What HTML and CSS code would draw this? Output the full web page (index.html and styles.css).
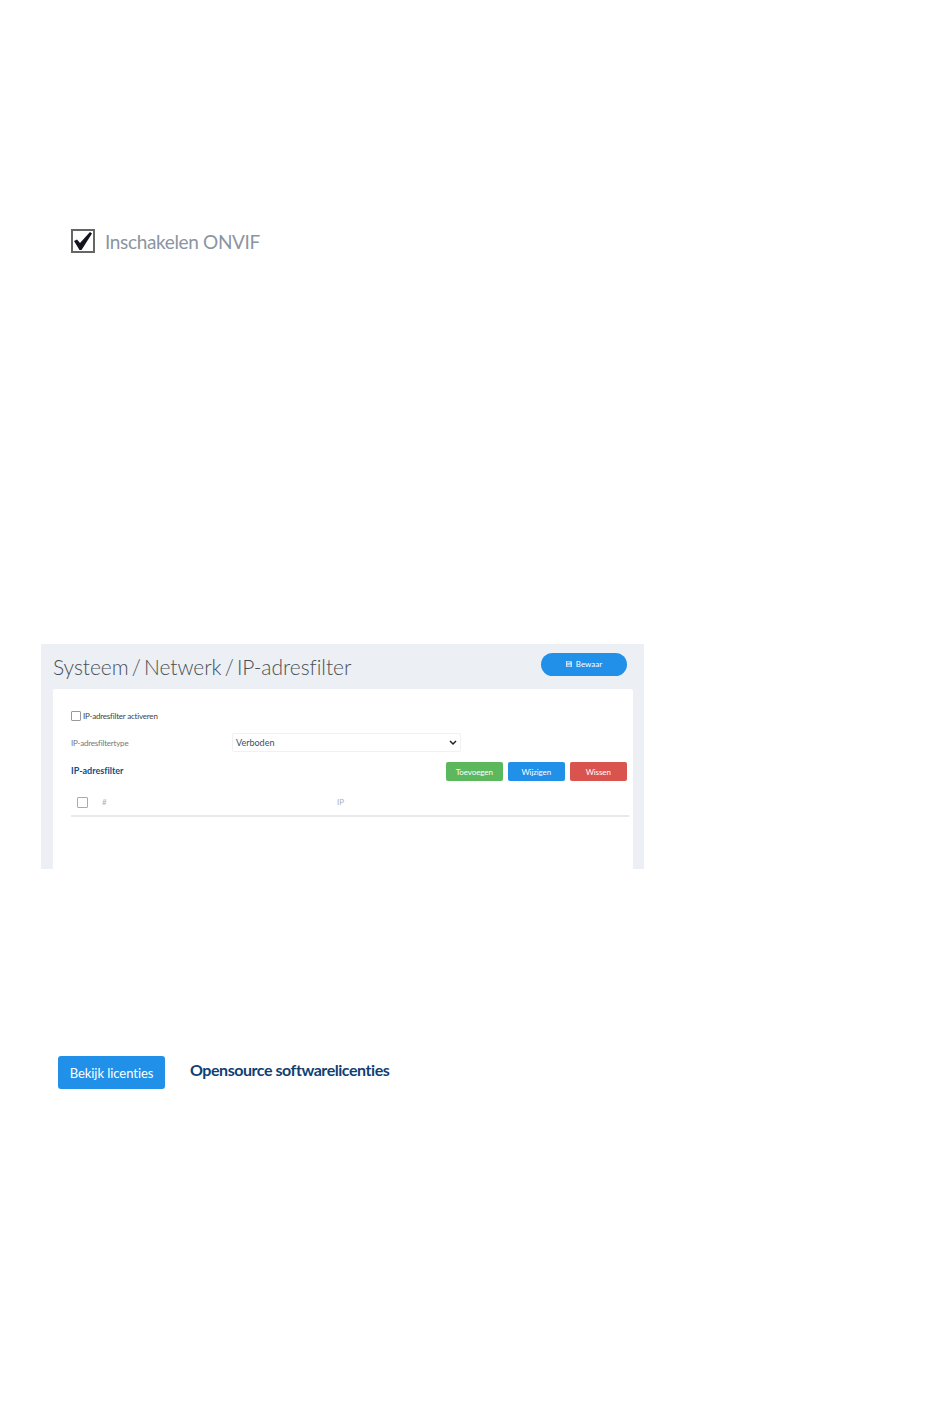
FILE: index.html
```html
<!DOCTYPE html>
<html lang="nl">
<head>
  <meta charset="UTF-8" />
  <title>ONVIF en IP-adresfilter</title>
  <link rel="stylesheet" href="styles.css">
</head>
<body>
  <div class="onvif">
    <span class="big-check">
      <svg viewBox="0 0 20 20" width="20" height="20"><path d="M1 10l3-1.500 3 3.500L17 1l2 1.500L8.500 19h-2z" fill="#14141e"/></svg>
    </span>
    <span class="onvif-label">Inschakelen ONVIF</span>
  </div>

  <div class="panel">
    <div class="panel-head">
      <h1>Systeem / Netwerk / IP-adresfilter</h1>
      <button class="save">
        <svg viewBox="0 0 6 6" width="6" height="6"><path d="M0 0h5l1 1v5H0z" fill="#cfe4f8"/><path d="M1 .6h3.400v1.600H1zM1.200 3.400h3.600v2H1.200z" fill="#5ba9ec"/></svg>
        Bewaar
      </button>
    </div>
    <div class="card">
      <label class="activate"><span class="box"></span>IP-adresfilter activeren</label>
      <div class="type-row">
        <span class="type-label">IP-adresfiltertype</span>
        <div class="select">
          <span>Verboden</span>
          <svg viewBox="0 0 8 6" width="8" height="6"><path d="M1 1l3 3 3-3" fill="none" stroke="#222" stroke-width="1.500"/></svg>
        </div>
      </div>
      <div class="filter-row">
        <h2>IP-adresfilter</h2>
        <div class="actions">
          <button class="btn green">Toevoegen</button>
          <button class="btn blue">Wijzigen</button>
          <button class="btn red">Wissen</button>
        </div>
      </div>
      <div class="table-head">
        <span class="box"></span>
        <span class="col-num">#</span>
        <span class="col-ip">IP</span>
      </div>
    </div>
  </div>

  <div class="licenses">
    <button class="view">Bekijk licenties</button>
    <h2>Opensource softwarelicenties</h2>
  </div>
</body>
</html>
```

FILE: styles.css
```css
body {
  margin: 0;
  background: #fff;
  font-family: Lato, sans-serif;
  font-variant-ligatures: none;
  height: 1409px;
  overflow: hidden;
}

button {
  font-family: inherit;
  border: none;
  color: #fff;
}

.onvif {
  display: flex;
  align-items: center;
  gap: 10px;
  margin: 229px 0 0 71px;
}

.big-check {
  width: 20px;
  height: 20px;
  border: 2px solid #666;
  display: flex;
}

.onvif-label {
  font-size: 19px;
  letter-spacing: -0.35px;
  color: #8b95a1;
}

.panel {
  width: 603px;
  height: 225px;
  margin: 391px 0 0 41px;
  padding: 9px 11px 0 12px;
  box-sizing: border-box;
  background: #eceff4;
  overflow: hidden;
}

.panel-head {
  display: flex;
  justify-content: space-between;
  align-items: flex-start;
  height: 36px;
}

h1 {
  margin: 0;
  padding-top: 1px;
  font-size: 21px;
  font-weight: 300;
  line-height: 26px;
  word-spacing: -2.500px;
  letter-spacing: -0.05px;
  color: #4a4f55;
}

.save {
  width: 86px;
  height: 23px;
  margin-right: 6px;
  padding: 0 0 1px;
  border-radius: 12px;
  background: #2190e8;
  font-size: 8px;
  display: flex;
  align-items: center;
  justify-content: center;
  gap: 4px;
}

.card {
  height: 180px;
  padding: 22px 4px 0 18px;
  box-sizing: border-box;
  background: #fff;
  border-radius: 2px 2px 0 0;
}

.box {
  display: block;
  flex: none;
  box-sizing: border-box;
  width: 10px;
  height: 10px;
  border: 1px solid #999;
  border-radius: 1px;
}

.activate {
  display: flex;
  align-items: center;
  gap: 2px;
  font-size: 8px;
  line-height: 10px;
  letter-spacing: -0.2px;
  color: #444;
}

.type-row {
  display: flex;
  align-items: center;
  margin-top: 12px;
}

.type-label {
  width: 161px;
  font-size: 8px;
  letter-spacing: -0.2px;
  color: #777;
}

.select {
  width: 229px;
  height: 19px;
  padding: 0 3px 0 3px;
  box-sizing: border-box;
  border: 1px solid #f0f1f3;
  border-radius: 2px;
  display: flex;
  align-items: center;
  justify-content: space-between;
  font-size: 9px;
  color: #34506c;
}

.filter-row {
  display: flex;
  justify-content: space-between;
  align-items: center;
  margin-top: 10px;
  padding-right: 2px;
}

.filter-row h2 {
  margin: 0 0 2px;
  font-size: 9px;
  font-weight: 700;
  color: #0f4c8a;
}

.actions {
  display: flex;
  gap: 4.500px;
}

.btn {
  width: 57.500px;
  height: 19px;
  padding: 0;
  border-radius: 2px;
  font-size: 8px;
  letter-spacing: -0.1px;
}

.green { background: #5cb85c; }
.blue { background: #2190e8; }
.red { background: #d9534f; }

.table-head {
  display: flex;
  align-items: center;
  height: 36px;
  box-sizing: border-box;
  padding: 8px 0 0 6px;
  border-bottom: 2px solid #e9e9e9;
  font-size: 8px;
  color: #a9b2bc;
}

.table-head .box {
  width: 11px;
  height: 11px;
  border: 1.500px solid #aaa;
}

.col-num {
  margin-left: 14px;
  width: 235px;
}

.licenses {
  display: flex;
  align-items: flex-start;
  gap: 25px;
  margin: 187px 0 0 58px;
}

.view {
  width: 107px;
  height: 33px;
  padding: 0;
  border-radius: 3px;
  background: #2190e8;
  font-size: 13px;
  letter-spacing: -0.05px;
}

.licenses h2 {
  margin: 4px 0 0;
  font-size: 16px;
  line-height: 20px;
  font-weight: 700;
  letter-spacing: -0.45px;
  color: #0f3f73;
}
```
